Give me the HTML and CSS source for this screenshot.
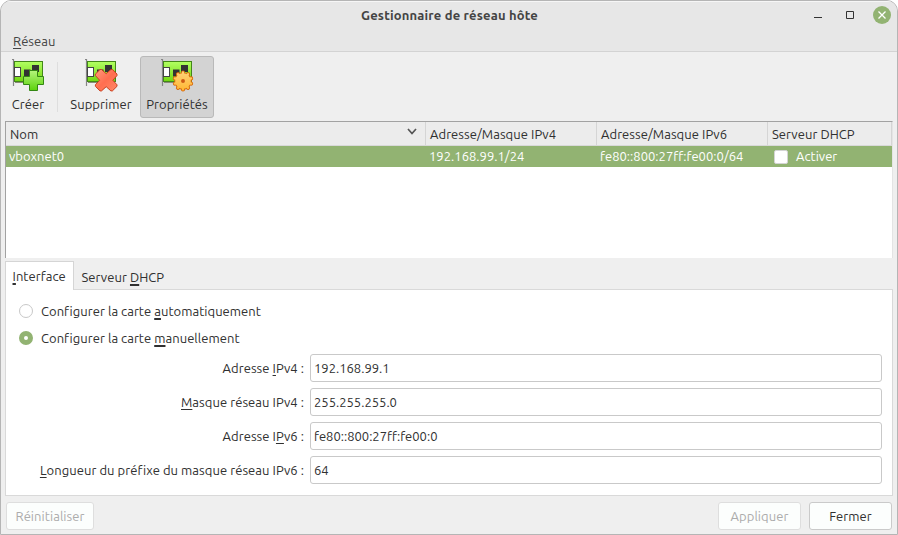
FILE: index.html
```html
<!DOCTYPE html>
<html lang="fr">
<head>
<meta charset="utf-8">
<title>Gestionnaire de réseau hôte</title>
<link rel="stylesheet" href="styles.css">
</head>
<body>
<svg class="defs" width="0" height="0" aria-hidden="true">
  <defs>
    <linearGradient id="board" x2="0" y2="1"><stop stop-color="#b2ff62"/><stop offset="1" stop-color="#72d711"/></linearGradient>
    <linearGradient id="plus" x2="0" y2="1"><stop stop-color="#b5f57c"/><stop offset="1" stop-color="#5bd20b"/></linearGradient>
    <linearGradient id="cross" x2="1" y2="1"><stop stop-color="#ff9a7c"/><stop offset=".5" stop-color="#ff6e50"/><stop offset="1" stop-color="#ff8a68"/></linearGradient>
    <linearGradient id="gear" gradientUnits="userSpaceOnUse" x1="0" y1="-10" x2="0" y2="10"><stop stop-color="#ffd47c"/><stop offset="1" stop-color="#ffb52f"/></linearGradient>
    <symbol id="card" viewBox="0 0 32 32">
      <path d="M0 .5h1.500V27" fill="none" stroke="#858585" stroke-width="1.200"/>
      <rect x="2.500" y="2.500" width="28" height="20" fill="url(#board)" stroke="#438719"/>
      <path d="M3 23.500h11" stroke="#8a8a7a"/>
      <rect x="2.500" y="8.500" width="6" height="9" fill="#fff" stroke="#444"/>
      <path d="M20 6h7v7h-7zM12 10.500h6.500v7H12z" fill="#333"/>
    </symbol>
  </defs>
</svg>
<div class="window">
  <header class="head">
    <div class="titlebar">
      <h1><span>Gestionnaire de réseau hôte</span></h1>
      <svg class="controls" width="78" height="20" viewBox="0 0 78 20"><path d="M0 13.500h8" stroke="#333"/><path d="M32.500 7.500h7v7h-7z" fill="none" stroke="#333"/><circle cx="68" cy="11" r="9" fill="#92b372"/><path d="M64.500 7.500l7 7m0-7l-7 7" stroke="#fff" stroke-width="1.300"/></svg>
    </div>
    <nav class="menu"><span><u>R</u>éseau</span></nav>
  </header>
  <div class="toolbar">
    <button class="tool create"><svg width="32" height="32"><use href="#card"/><path d="M17.500 11.500h8v6h6v8h-6v6h-8v-6h-6v-8h6z" fill="url(#plus)" stroke="#338713" stroke-linejoin="round"/></svg><span>Créer</span></button>
    <i class="rule"></i>
    <button class="tool remove"><svg width="32" height="32"><use href="#card"/><path d="M15 10.500h1.500l4.700 4.200 4.700-4.200h1.500l4.600 4.600v1.500l-4.200 4.600 4.200 4.600v1.500L27.400 31.900h-1.500l-4.700-4.200-4.700 4.200H15l-4.600-4.600v-1.500l4.200-4.600-4.200-4.600v-1.500z" fill="url(#cross)" stroke="#c9401f" stroke-linejoin="round"/></svg><span>Supprimer</span></button>
    <button class="tool props"><svg width="32" height="32"><use href="#card"/><g transform="translate(22 22) scale(1.040)" stroke-linecap="round"><path d="M0-8.200V8.200M4.820-6.630L-4.820 6.630M7.800-2.530L-7.800 2.530M7.800 2.530L-7.800-2.530M4.820 6.630L-4.820-6.630" stroke="#d9690a" stroke-width="4"/><circle r="8.400" fill="#d9690a"/><path d="M.01-8.200V8.200M4.820-6.630L-4.820 6.630M7.800-2.530L-7.800 2.530M7.800 2.530L-7.800-2.530M4.820 6.630L-4.820-6.630" stroke="url(#gear)" stroke-width="2.200"/><circle r="7.500" fill="url(#gear)"/><circle r="1.900" fill="#cf5a13"/></g></svg><span>Propriétés</span></button>
  </div>
  <section class="table">
    <div class="row thead">
      <div><span>Nom</span><svg class="chev" width="10" height="7" viewBox="0 0 10 7"><path d="M1 1l4 4.500L9 1" fill="none" stroke="#555" stroke-width="1.700"/></svg></div>
      <div><span>Adresse/Masque IPv4</span></div><div><span>Adresse/Masque IPv6</span></div><div><span>Serveur DHCP</span></div>
    </div>
    <div class="row selected">
      <div><span>vboxnet0</span></div><div><span>192.168.99.1/24</span></div><div><span>fe80::800:27ff:fe00:0/64</span></div><div><i class="check"></i><span>Activer</span></div>
    </div>
  </section>
  <div class="tabs"><div class="tab active"><span><u>I</u>nterface</span></div><div class="tab"><span>Serveur <u>D</u>HCP</span></div></div>
  <main class="panel">
    <div class="radio"><i></i><span>Configurer la carte <u>a</u>utomatiquement</span></div>
    <div class="radio on"><i></i><span>Configurer la carte <u>m</u>anuellement</span></div>
    <div class="form">
      <label><span>Adresse <u>I</u>Pv4 :</span></label><div class="field"><span>192.168.99.1</span></div>
      <label><span><u>M</u>asque réseau IPv4 :</span></label><div class="field"><span>255.255.255.0</span></div>
      <label><span>Adresse I<u>P</u>v6 :</span></label><div class="field"><span>fe80::800:27ff:fe00:0</span></div>
      <label><span><u>L</u>ongueur du préfixe du masque réseau IPv6 :</span></label><div class="field"><span>64</span></div>
    </div>
  </main>
  <footer><button class="btn disabled reset"><span>Réinitialiser</span></button><button class="btn disabled"><span>Appliquer</span></button><button class="btn"><span>Fermer</span></button></footer>
</div>
</body>
</html>
```

FILE: styles.css
```css
* { box-sizing: border-box; }
body { margin: 0; background: #fff; font: 13px/20px "Ubuntu", "Noto Sans", "Open Sans", sans-serif; letter-spacing: .055px; color: #303030; overflow: hidden; }
button { font: inherit; letter-spacing: inherit; color: inherit; padding: 0; border: 0; background: none; }
span { white-space: nowrap; }
u { text-underline-offset: 2px; text-decoration-thickness: 1px; text-decoration-skip-ink: none; }
.defs { position: absolute; }
.window { width: 898px; height: 535px; background: #efefef; border: 1px solid #b5b5b5; border-radius: 11px 11px 0 0; overflow: hidden; display: flex; flex-direction: column; }
.head { height: 51px; background: #e7e7e7; border-bottom: 1px solid #d3d3d3; border-top: 1px solid #f6f6f6; flex: none; }
.titlebar { height: 29px; display: grid; grid-template-columns: 1fr auto 1fr; padding-top: 3px; }
h1 { grid-column: 2; margin: 0; font-size: 13px; font-weight: 600; line-height: 20px; letter-spacing: .18px; padding-left: 1px; color: #444; }
.controls { justify-self: end; margin: -1px 5px 0 0; }
.menu { padding: 0 12px; color: #444; }
.toolbar { height: 69px; display: flex; padding-top: 4px; flex: none; }
.tool { height: 62px; display: flex; flex-direction: column; align-items: center; padding-top: 2px; border: 1px solid transparent; border-radius: 3px; }
.tool svg { overflow: visible; flex: none; }
.tool span { margin-top: 3px; }
.create { width: 54px; }
.rule { width: 1px; height: 50px; margin: 6px 6px 0 2px; background: #dedede; }
.remove { width: 74px; }
.props { width: 74px; margin-left: 2px; background: #d3d3d3; border-color: #b9b9b9; }
.table { height: 137px; margin: 0 4px; border: 1px solid #a2a2a2; border-right-color: #e4e4e4; border-bottom: 0; background: #fff; flex: none; }
.row { display: grid; grid-template-columns: 420px 171px 171px 1fr; }
.row > div { display: flex; align-items: center; padding-left: 4px; }
.thead { height: 24px; background: #ececec; border-bottom: 1px solid #d9d9d9; }
.thead > div { border-right: 1px solid #d5d5d5; }
.chev { margin: 0 8px 5px auto; }
.selected { height: 21px; background: #92b372; color: #fff; letter-spacing: .02px; }
.selected > div { padding-left: 3px; }
.selected span { margin-top: -2px; }
.check { width: 14px; height: 14px; margin: 0 8px 0 3px; background: #fff; border: 1px solid #d4d4d4; border-radius: 2px; }
.tabs { height: 32px; padding: 3px 0 0 4px; display: flex; flex: none; }
.tab { padding: 6px 7.5px 0; height: 28px; }
.tab.active { width: 69px; height: 29px; padding: 4px 0 0 6.5px; background: #fff; border: 1px solid #d5d5d5; border-bottom: 0; position: relative; z-index: 1; }
.tab u, .radio u { text-decoration-thickness: 2px; }
.panel { height: 207px; margin: -1px 4px 0; background: #fff; border: 1px solid #d9d9d9; padding: 11px 10px 0 13px; flex: none; }
.radio { height: 20px; margin-bottom: 7px; display: flex; align-items: center; gap: 8px; letter-spacing: .04px; }
.radio i { width: 14px; height: 14px; border: 1px solid #c8c8c8; border-radius: 50%; background: #fff; }
.radio.on i { border: 5px solid #92b372; }
.form { display: grid; grid-template-columns: 285px 1fr; grid-auto-rows: 28px; gap: 6px; margin-top: -1px; }
.form label { display: flex; justify-content: flex-end; align-items: center; }
.field { display: flex; align-items: center; border: 1px solid #c9c9c9; border-radius: 3px; padding-left: 3px; letter-spacing: 0; }
footer { display: flex; gap: 8px; padding: 6px 5px 0; }
.btn { width: 83px; height: 28px; background: #fcfefd; border: 1px solid #cacaca; border-radius: 3px; }
.btn.disabled { color: #acacac; border-color: #dedede; }
.reset { width: 88px; margin-right: auto; }
```
